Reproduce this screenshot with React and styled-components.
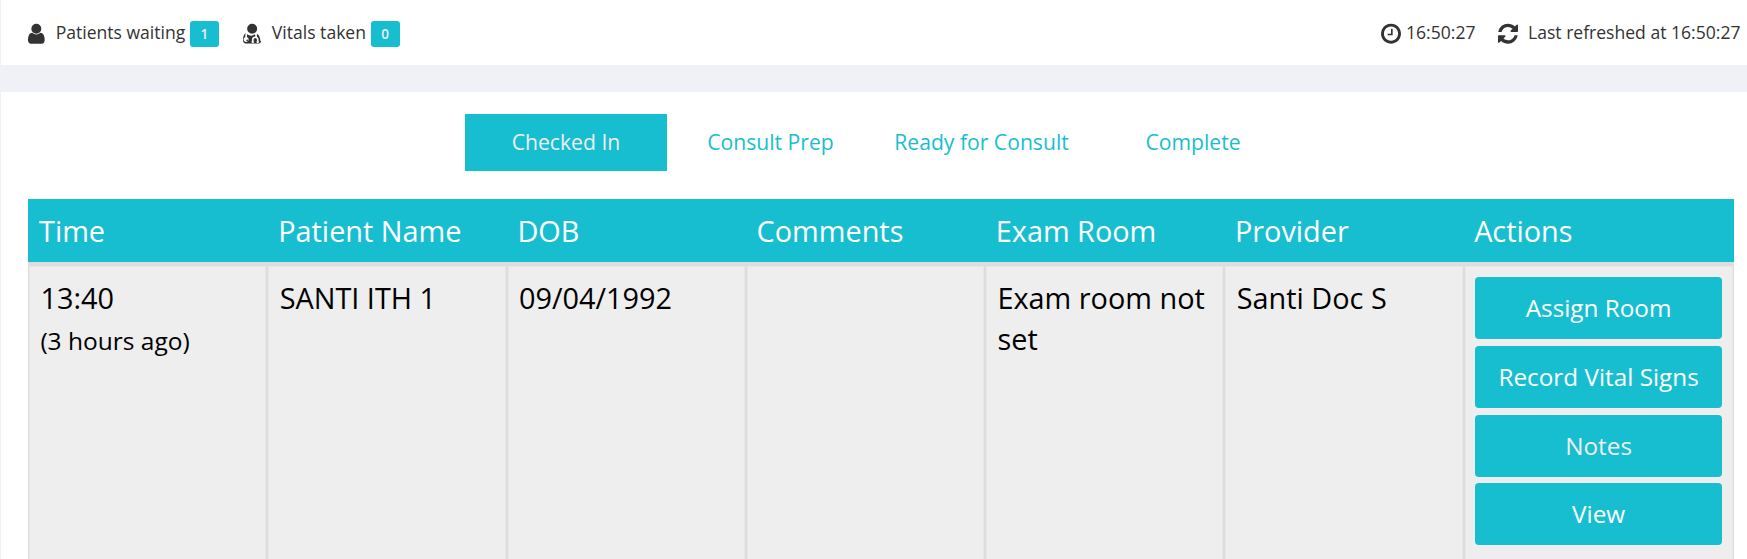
import React from "react";
import styled, { createGlobalStyle } from "styled-components";

const teal = "#17bed0";
const line = "#ddd";
const softLine = "#e7e7e7";

const GlobalStyle = createGlobalStyle`
  *, *::before, *::after { box-sizing: border-box; }
  html { overflow: hidden; }
  body {
    margin: 0;
    height: 559px;
    overflow: hidden;
    background: #f0f1f6;
    font-family: "Open Sans", "Noto Sans", sans-serif;
    color: #333;
  }
`;

const Page = styled.div`
  display: flex;
  flex-direction: column;
  gap: 27px;
  height: 559px;
  padding-left: 1px;
  overflow: hidden;
`;

const StatusBar = styled.header`
  display: flex;
  flex: none;
  justify-content: space-between;
  height: 65px;
  padding: 0 6.5px 0 27px;
  background: #fff;
  font-size: 17.57px;
`;

const StatusGroup = styled.div`
  display: flex;
  align-items: flex-start;
  gap: ${(p) => p.$gap}px;
  padding-top: 20px;
`;

const StatusItem = styled.div`
  display: flex;
  align-items: flex-start;
  line-height: 25px;
  white-space: nowrap;
`;

const Icon = styled.svg`
  flex: none;
  width: ${(p) => p.$width}px;
  height: 23.33px;
  margin: 2px ${(p) => p.$after}px 0 0;
  fill: #333;
`;

const Badge = styled.span`
  width: 29px;
  height: 26px;
  margin: 1px 0 0 4.6px;
  border-radius: 3px;
  background: ${teal};
  color: #eee;
  font-size: 13.5px;
  font-weight: 600;
  line-height: 26px;
  text-align: center;
`;

const Panel = styled.main`
  flex: 1;
  min-height: 0;
  padding: 22px 13px 0 27px;
  background: #fff;
`;

const Tabs = styled.nav`
  display: flex;
  justify-content: center;
  margin-bottom: 28px;
`;

const Tab = styled.button`
  width: ${(p) => p.$width}px;
  height: 57px;
  padding: 0 0 2px;
  border: 0;
  background: ${(p) => (p.$active ? teal : "transparent")};
  color: ${(p) => (p.$active ? "#eee" : teal)};
  font: 21.15px "Open Sans", sans-serif;
`;

const Table = styled.section`
  display: grid;
  grid-template-rows: 63px 400px;
`;

const Row = styled.div`
  display: grid;
  grid-template-columns: repeat(6, 239.2px) 1fr;
`;

const HeadRow = styled(Row)`
  background: ${teal};
`;

const HeadCell = styled.div`
  padding: 12px 0 0 11px;
  color: #fff;
  font-size: 28.85px;
  line-height: 40px;
`;

const BodyRow = styled(Row)`
  grid-template-columns: repeat(6, 239.27px) 1fr;
  border: solid ${line};
  border-width: 4px 1px 0;
  background: #eee;
  box-shadow: inset 1px 1px ${softLine}, inset -1px 0 ${softLine};
`;

const Cell = styled.div`
  padding: 11px 8px 0 11.4px;
  border-right: 2px solid ${line};
  box-shadow: 1px 0 ${softLine}, inset -1px 0 ${softLine};
  color: #000;
  font-size: 28.85px;
  line-height: 41px;
`;

const ActionCell = styled.div`
  display: flex;
  flex-direction: column;
  gap: 6.6px;
  padding: 11.4px 11px 0 10.6px;
`;

const Ago = styled.div`
  font-size: 24.5px;
  line-height: 45px;
`;

const ActionButton = styled.button`
  height: 62px;
  padding: 0 0 1px;
  border: 0;
  border-radius: 4px;
  background: ${teal};
  color: ${(p) => (p.$muted ? "#eee" : "#fff")};
  font: 24.3px "Open Sans", sans-serif;
`;

const UserIcon = () => (
  <Icon viewBox="256 0 1280 1792" $width={16.67} $after={11}>
    <path d="M1536 1399q0 109-62.5 187t-150.5 78h-854q-88 0-150.5-78t-62.5-187q0-85 8.5-160.5t31.5-152 58.5-131 94-89 134.5-34.5q131 128 313 128t313-128q76 0 134.5 34.5t94 89 58.5 131 31.5 152 8.5 160.5zm-256-887q0 159-112.5 271.5t-271.5 112.5-271.5-112.5-112.5-271.5 112.5-271.5 271.5-112.5 271.5 112.5 112.5 271.5z" />
  </Icon>
);

const DoctorIcon = () => (
  <Icon viewBox="192 0 1408 1792" $width={18.33} $after={10.6}>
    <path d="M576 1408q0 26-19 45t-45 19-45-19-19-45 19-45 45-19 45 19 19 45zm1024-13q0 120-73 189.5t-194 69.5h-874q-121 0-194-69.5t-73-189.5q0-61 4.5-118t19-125.5 37.5-123.5 63.5-103.5 93.5-74.5l-22 64q-22 64-22 128v123q-58 20-93 70t-35 111q0 80 56 136t136 56 136-56 56-136q0-61-35.5-111t-92.5-70v-123q0-62 25-93 132 104 295 104t295-104q25 31 25 93v64q-106 0-181 75t-75 181v89q-32 29-32 71 0 40 28 68t68 28 68-28 28-68q0-42-32-71v-89q0-52 38-90t90-38 90 38 38 90v89q-32 29-32 71 0 40 28 68t68 28 68-28 28-68q0-42-32-71v-89q0-68-34.5-127.5t-93.5-93.5q0-10 .5-42.5t0-48-2.5-41.5-7-47-13-40q68 15 120 60.5t81 103 47.5 132.5 24 138 5.5 131zm-320-883q0 159-112.5 271.5t-271.5 112.5-271.5-112.5-112.5-271.5 112.5-271.5 271.5-112.5 271.5 112.5 112.5 271.5z" />
  </Icon>
);

const ClockIcon = () => (
  <Icon viewBox="128 0 1536 1792" $width={20} $after={5}>
    <path d="M1024 544v448q0 14-9 23t-23 9h-320q-14 0-23-9t-9-23v-64q0-14 9-23t23-9h224v-352q0-14 9-23t23-9h64q14 0 23 9t9 23zm416 352q0-148-73-273t-198-198-273-73-273 73-198 198-73 273 73 273 198 198 273 73 273-73 198-198 73-273zm224 0q0 209-103 385.5t-279.5 279.5-385.5 103-385.5-103-279.5-279.5-103-385.5 103-385.5 279.5-279.5 385.5-103 385.5 103 279.5 279.5 103 385.5z" />
  </Icon>
);

const RefreshIcon = () => (
  <Icon viewBox="128 0 1536 1792" $width={20} $after={10}>
    <path d="M1639 1056q0 5-1 7-64 268-268 434.5t-478 166.5q-146 0-282.5-55t-243.5-157l-129 129q-19 19-45 19t-45-19-19-45v-448q0-26 19-45t45-19h448q26 0 45 19t19 45-19 45l-137 137q71 66 161 102t187 36q134 0 250-65t186-179q11-17 53-117 8-23 30-23h192q13 0 22.5 9.5t9.5 22.5zm25-800v448q0 26-19 45t-45 19h-448q-26 0-45-19t-19-45 19-45l138-138q-148-137-349-137-134 0-250 65t-186 179q-11 17-53 117-8 23-30 23h-199q-13 0-22.5-9.5t-9.5-22.5v-7q65-268 270-434.5t480-166.5q146 0 284 55.5t245 156.5l130-129q19-19 45-19t45 19 19 45z" />
  </Icon>
);

const columns = ["Time", "Patient Name", "DOB", "Comments", "Exam Room", "Provider", "Actions"];

export default function App() {
  return (
    <>
      <GlobalStyle />
      <Page>
        <StatusBar>
          <StatusGroup $gap={24}>
            <StatusItem><UserIcon />Patients waiting<Badge>1</Badge></StatusItem>
            <StatusItem><DoctorIcon />Vitals taken<Badge>0</Badge></StatusItem>
          </StatusGroup>
          <StatusGroup $gap={22.5}>
            <StatusItem><ClockIcon />16:50:27</StatusItem>
            <StatusItem><RefreshIcon />Last refreshed at 16:50:27</StatusItem>
          </StatusGroup>
        </StatusBar>
        <Panel>
          <Tabs>
            <Tab $width={202} $active>Checked In</Tab>
            <Tab $width={207}>Consult Prep</Tab>
            <Tab $width={215}>Ready for Consult</Tab>
            <Tab $width={208}>Complete</Tab>
          </Tabs>
          <Table>
            <HeadRow>
              {columns.map((c) => <HeadCell key={c}>{c}</HeadCell>)}
            </HeadRow>
            <BodyRow>
              <Cell>13:40<Ago>(3 hours ago)</Ago></Cell>
              <Cell>SANTI ITH 1</Cell>
              <Cell>09/04/1992</Cell>
              <Cell />
              <Cell>Exam room not set</Cell>
              <Cell>Santi Doc S</Cell>
              <ActionCell>
                <ActionButton>Assign Room</ActionButton>
                <ActionButton>Record Vital Signs</ActionButton>
                <ActionButton $muted>Notes</ActionButton>
                <ActionButton>View</ActionButton>
              </ActionCell>
            </BodyRow>
          </Table>
        </Panel>
      </Page>
    </>
  );
}
